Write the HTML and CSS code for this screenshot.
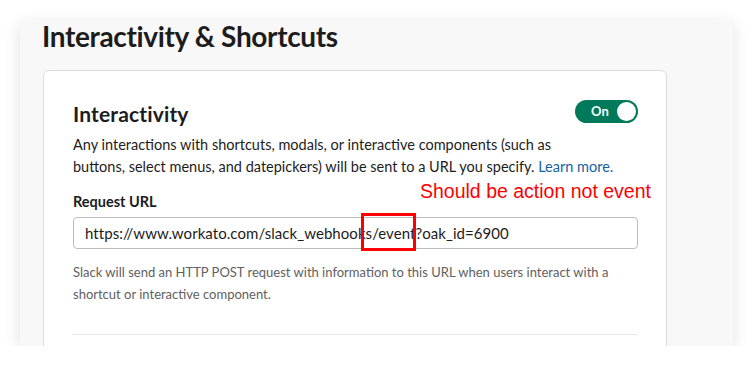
FILE: index.html
```html
<!DOCTYPE html>
<html lang="en">
<head>
<meta charset="utf-8">
<title>Interactivity &amp; Shortcuts</title>
<link rel="stylesheet" href="styles.css">
</head>
<body>
<div class="frame">
  <div class="panel">
    <h1 class="page-title">Interactivity &amp; Shortcuts</h1>
    <div class="card">
      <div class="card-head">
        <h2 class="card-title">Interactivity</h2>
        <div class="toggle"><span class="toggle-label">On</span><span class="toggle-knob"></span></div>
      </div>
      <p class="desc">Any interactions with shortcuts, modals, or interactive components (such as<br>buttons, select menus, and datepickers) will be sent to a URL you specify. <a class="link" href="#">Learn more.</a></p>
      <label class="field-label">Request URL</label>
      <div class="input">https://www.workato.com/slack_webhooks/event?oak_id=6900</div>
      <p class="help">Slack will send an HTTP POST request with information to this URL when users interact with a shortcut or interactive component.</p>
      <div class="divider"></div>
    </div>
  </div>
  <div class="note">Should be action not event</div>
  <div class="note-box"></div>
</div>
</body>
</html>
```
FILE: styles.css
```css
html, body {
  margin: 0;
  padding: 0;
  background: #ffffff;
}
.frame {
  position: relative;
  padding: 20px 20px 0 20px;
  font-family: Lato, "Noto Sans", sans-serif;
  color: #1d1c1d;
}
.panel {
  background: #f8f8f8;
  height: 326px;
  overflow: hidden;
  box-sizing: border-box;
  padding: 0 66px 0 23px;
  box-shadow: 0 4px 16px rgba(0, 0, 0, 0.12);
}
.page-title {
  margin: 0 0 0 -1px;
  font-size: 28px;
  font-weight: 700;
  line-height: 32px;
  letter-spacing: -0.35px;
  color: #1d1c1d;
}
.card {
  margin-top: 18px;
  background: #ffffff;
  border: 1px solid #dddddd;
  border-radius: 6px;
  padding: 29px 28px 0 29px;
  min-height: 400px;
}
.card-head {
  display: flex;
  justify-content: space-between;
  align-items: flex-start;
}
.card-title {
  margin: 0;
  font-size: 21px;
  font-weight: 700;
  line-height: 28px;
  letter-spacing: 0.15px;
}
.toggle {
  display: flex;
  align-items: center;
  justify-content: space-between;
  box-sizing: border-box;
  width: 63px;
  height: 23px;
  border-radius: 12px;
  background: #007a5a;
  padding: 2px 2px 2px 16px;
}
.toggle-label {
  color: #ffffff;
  font-size: 13px;
  font-weight: 700;
  line-height: 1;
}
.toggle-knob {
  width: 19px;
  height: 19px;
  border-radius: 50%;
  background: #ffffff;
}
.desc {
  margin: 6px 0 0 0;
  font-size: 14.5px;
  line-height: 22px;
}
.link {
  color: #1264a3;
  text-decoration: none;
}
.field-label {
  display: block;
  margin-top: 13px;
  font-size: 14.5px;
  font-weight: 700;
  line-height: 22px;
}
.input {
  margin-top: 4px;
  height: 32px;
  box-sizing: border-box;
  border: 1px solid #bcbcbc;
  border-radius: 4px;
  padding: 0 11px;
  font-size: 15px;
  line-height: 30px;
  letter-spacing: 0.06px;
}
.help {
  margin: 12px 0 0 0;
  font-size: 13px;
  line-height: 22px;
  color: #616061;
}
.divider {
  margin-top: 29px;
  border-top: 1px solid #e8e8e8;
}
.note {
  position: absolute;
  left: 420px;
  top: 182px;
  font-family: "Liberation Sans", Arial, sans-serif;
  font-size: 19.5px;
  line-height: 1;
  color: #ff0000;
  white-space: nowrap;
}
.note-box {
  position: absolute;
  left: 361px;
  top: 213px;
  width: 55px;
  height: 38px;
  box-sizing: border-box;
  border: 3px solid #ff0000;
}
```
